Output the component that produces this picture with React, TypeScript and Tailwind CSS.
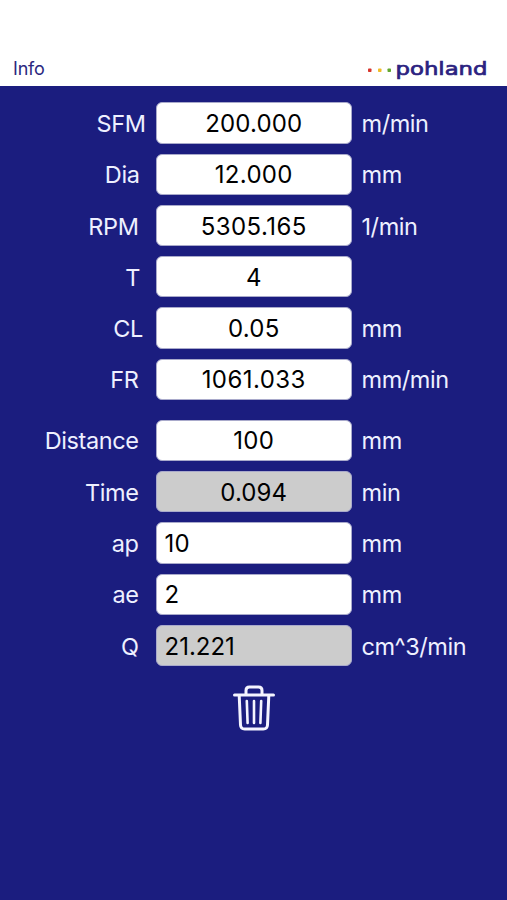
type Row = {
  label: string;
  value: string;
  unit?: string;
  labelClass?: string;
  valueClass?: string;
  readOnly?: boolean;
  align?: "left";
};

const cuttingRows: Row[] = [
  { label: "SFM", value: "200.000", unit: "m/min", labelClass: "pr-[10.5px]", valueClass: "tracking-[0.15px]" },
  { label: "Dia", value: "12.000", unit: "mm", labelClass: "pr-[16.5px]", valueClass: "tracking-[0.3px]" },
  { label: "RPM", value: "5305.165", unit: "1/min", labelClass: "pr-[17.5px]", valueClass: "tracking-[0.45px]" },
  { label: "T", value: "4", labelClass: "pr-[16px]" },
  { label: "CL", value: "0.05", unit: "mm", labelClass: "pr-[13px]", valueClass: "tracking-[0.25px]" },
  { label: "FR", value: "1061.033", unit: "mm/min", labelClass: "pr-[17.5px]", valueClass: "tracking-[0.45px]" },
];

const volumeRows: Row[] = [
  { label: "Distance", value: "100", unit: "mm", valueClass: "tracking-[0.4px]" },
  { label: "Time", value: "0.094", unit: "min", readOnly: true, valueClass: "tracking-[0.1px]" },
  { label: "ap", value: "10", unit: "mm", align: "left", valueClass: "tracking-[0.3px]" },
  { label: "ae", value: "2", unit: "mm", align: "left" },
  { label: "Q", value: "21.221", unit: "cm^3/min", readOnly: true, align: "left" },
];

function Field({ label, value, unit, labelClass = "pr-[17.5px]", valueClass = "", readOnly, align }: Row) {
  return (
    <div className="flex h-[41.3px] items-center">
      <span
        className={`w-[156px] shrink-0 pt-[2px] text-right text-[23.5px] tracking-[-0.4px] text-[#eef0ff] ${labelClass}`}
      >
        {label}
      </span>
      <div
        className={`flex h-full w-[195.5px] shrink-0 items-center rounded-[6px] border border-[#a9aacb] pt-[2px] text-black ${
          readOnly ? "bg-[#cccccc]" : "bg-white"
        } ${align === "left" ? "justify-start pl-[7.5px]" : "justify-center"}`}
      >
        <span className={valueClass}>{value}</span>
      </div>
      <span className="pt-[2px] pl-[10px] text-[23.5px] tracking-[-0.45px] text-[#eef0ff]">{unit}</span>
    </div>
  );
}

function Logo() {
  return (
    <svg width="122" height="26" viewBox="0 0 122 26" role="img" aria-label="pohland">
      <rect x="3" y="10.5" width="3.5" height="3.5" rx="0.8" fill="#d8342b" />
      <rect x="13" y="10.5" width="3.5" height="3.5" rx="0.8" fill="#f0bc28" />
      <rect x="22.5" y="10.5" width="3.5" height="3.5" rx="0.8" fill="#63a72f" />
      <text
        x="30.5"
        y="16.5"
        fill="#2b2280"
        stroke="#2b2280"
        strokeWidth="0.7"
        strokeLinejoin="miter"
        fontFamily="DejaVu Sans, sans-serif"
        fontSize="18.5"
        textLength="92"
        lengthAdjust="spacingAndGlyphs"
      >
        pohland
      </text>
    </svg>
  );
}

function TrashIcon() {
  return (
    <svg
      width="42"
      height="46"
      viewBox="0 0 42 46"
      fill="none"
      stroke="#f4f4ff"
      strokeWidth="3"
      strokeLinecap="round"
      strokeLinejoin="round"
    >
      <path d="M1.5 10H40.5" />
      <path d="M13 9.5V5.5Q13 2 16.5 2H25.5Q29 2 29 5.5V9.5" />
      <path d="M6.2 10.5L7.5 40Q7.7 44 11.7 44H30.3Q34.3 44 34.5 40L35.8 10.5" />
      <path d="M13.8 16L14.6 38M21 16V38M28.2 16L27.4 38" strokeWidth="2.6" />
    </svg>
  );
}

export default function App() {
  return (
    <div className="flex h-[900px] w-[507px] flex-col overflow-hidden bg-[#1b1d7f] font-['Inter',sans-serif]">
      <header className="flex h-[86px] shrink-0 items-end justify-between bg-white pr-[20px] pl-[13px]">
        <button className="mb-[4px] text-[18px] leading-[26px] tracking-[-0.2px] text-[#2b2880]">Info</button>
        <div className="mb-[2px]">
          <Logo />
        </div>
      </header>

      <main className="flex flex-col pt-[16.3px] text-[24px] leading-[30px]">
        <div className="flex flex-col gap-[10px]">
          {cuttingRows.map((row) => (
            <Field key={row.label} {...row} />
          ))}
        </div>
        <div className="mt-[19.7px] flex flex-col gap-[10px]">
          {volumeRows.map((row) => (
            <Field key={row.label} {...row} />
          ))}
        </div>
        <button aria-label="Clear" className="mt-[19px] ml-[233px] w-[42px]">
          <TrashIcon />
        </button>
      </main>
    </div>
  );
}
